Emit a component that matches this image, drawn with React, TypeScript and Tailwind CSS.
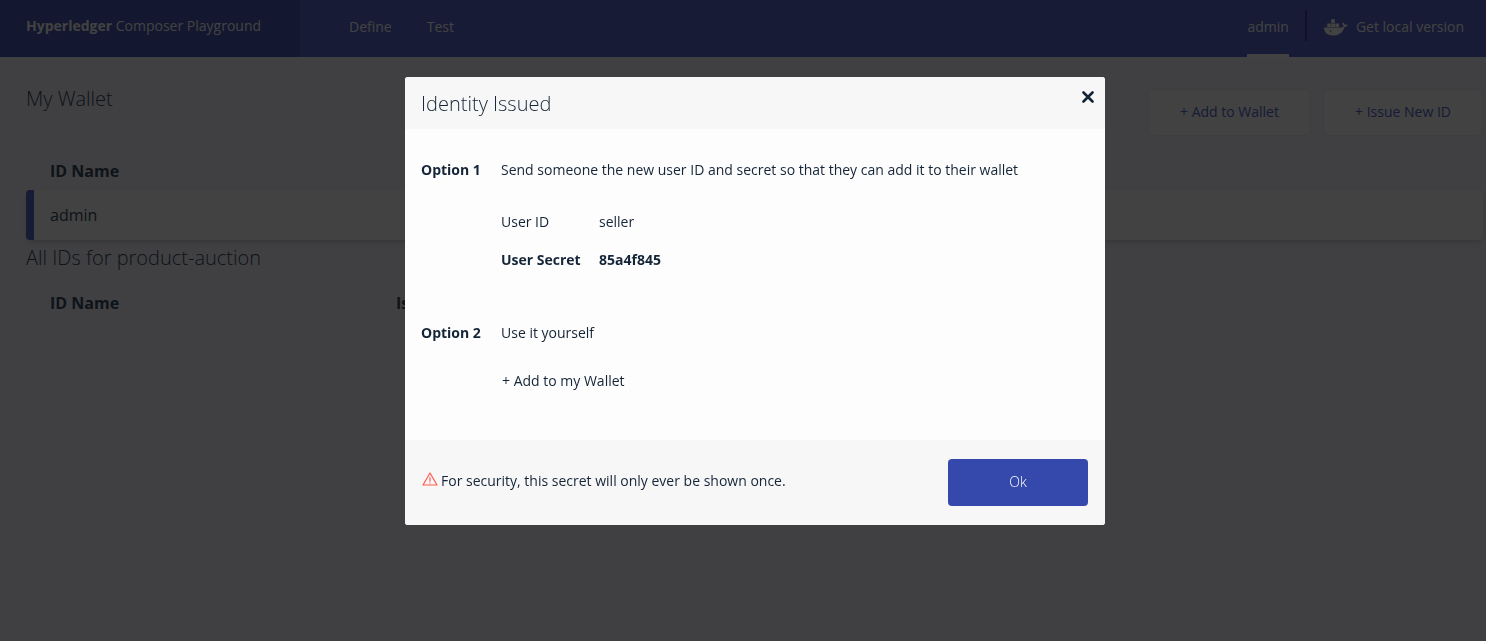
import React from "react";

function DockerIcon() {
  return (
    <svg viewBox="0 0 24 17" className="mt-0.5 h-[17px] w-6" fill="currentColor" aria-hidden="true">
      <path d="M0 8.6H17.6C18.9 8.3 19.3 7.7 19.7 7C18.2 6.2 18 4.6 18.8 3.2C20.1 3.8 20.6 4.7 20.6 5.6C21.8 5.3 23 5.5 24 6.1C23.4 7.3 22.2 7.9 20.6 7.9C18.8 13.4 15 16.5 9 16.5C3.4 16.5 0.2 13.8 0 8.6Z" />
      <path d="M3.2 4.5H6.8V8H3.2ZM7.2 4.5H10.9V8H7.2ZM11.3 4.5H15V8H11.3ZM7.2 0.2H10.9V4H7.2Z" />
      <circle cx="6.6" cy="12" r="0.8" fill="#3a4694" />
    </svg>
  );
}

function Navigation() {
  return (
    <nav className="flex h-[57px] bg-[#5868cc] text-sm text-white">
      <a href="#home" className="w-[300px] bg-[#4958b4] pt-4 pl-[26px]">
        <span className="font-bold">Hyperledger</span> Composer Playground
      </a>
      <div className="flex flex-1 gap-[35px] pt-[17px] pl-[49px]">
        <a href="#define">Define</a>
        <a href="#test">Test</a>
      </div>
      <div className="flex pr-[22px]">
        <a href="#admin" className="mr-4 border-b-3 border-white pt-[17px]">admin</a>
        <span className="mt-[10px] mr-[17px] h-[31px] w-0.5 bg-[#3a4694]" />
        <a href="#local" className="flex items-start gap-2 pt-[17px]">
          <DockerIcon />
          Get local version
        </a>
      </div>
    </nav>
  );
}

function Wallet() {
  return (
    <main className="pr-[3px] pl-[26px] text-[#364d60]">
      <header className="flex justify-between pt-8">
        <h1 className="text-xl leading-5 font-light">My Wallet</h1>
        <div className="flex gap-3 text-sm text-[#5868d0]">
          <button className="h-[47px] w-[163px] rounded-md border border-[#eeeef8] bg-white pb-0.5">+ Add to Wallet</button>
          <button className="h-[47px] w-[160px] rounded-md border border-[#eeeef8] bg-white pb-0.5">+ Issue New ID</button>
        </div>
      </header>
      <table className="mt-[21px] w-full text-left">
        <thead>
          <tr><th className="h-[33px] pb-1.5 pl-6 font-bold">ID Name</th></tr>
        </thead>
        <tbody>
          <tr>
            <td className="p-0">
              <div className="h-[50px] rounded border-l-8 border-[#5868cc] bg-white pl-4 leading-[50px] shadow-md">admin</div>
            </td>
          </tr>
        </tbody>
      </table>
      <h2 className="pt-1 text-xl leading-7 font-light">All IDs for product-auction</h2>
      <table className="mt-[19px] w-full text-left">
        <thead>
          <tr>
            <th className="w-[370px] pl-6 font-bold">ID Name</th>
            <th className="font-bold">Issued to</th>
          </tr>
        </thead>
      </table>
    </main>
  );
}

function CloseIcon() {
  return (
    <svg viewBox="0 0 12 12" className="h-3 w-3" fill="none" stroke="currentColor" strokeWidth="2.6" strokeLinecap="round">
      <path d="M1.5 1.5 10.5 10.5M10.5 1.5 1.5 10.5" />
    </svg>
  );
}

function WarningIcon() {
  return (
    <svg viewBox="0 0 16 14" className="mb-1 h-3.5 w-4" fill="none" stroke="#ff5a4b" strokeWidth="1.2" strokeLinejoin="round">
      <path d="M8 1 15 13H1Z" />
      <path d="M8 5.3V9.4M8 10.4V11.6" />
    </svg>
  );
}

function IdentityDialog() {
  return (
    <section
      role="dialog"
      aria-modal="true"
      aria-labelledby="dialog-title"
      className="w-[700px] max-w-full overflow-hidden rounded-[3px] bg-[#fdfdfd] text-sm text-[#152538]"
    >
      <header className="flex h-[52px] items-start justify-between bg-[#f7f7f7] pr-[11px] pl-4">
        <h2 id="dialog-title" className="pt-[13px] text-xl leading-7 font-light">Identity Issued</h2>
        <button aria-label="Close" className="mt-3.5"><CloseIcon /></button>
      </header>
      <div className="px-4 pt-[31px] pb-[49px] leading-5">
        <div className="grid grid-cols-[80px_1fr]">
          <h3 className="font-bold">Option 1</h3>
          <div>
            <p>Send someone the new user ID and secret so that they can add it to their wallet</p>
            <dl className="mt-8 grid grid-cols-[98px_1fr] gap-y-[18px]">
              <dt>User ID</dt>
              <dd>seller</dd>
              <dt className="font-bold">User Secret</dt>
              <dd className="font-bold">85a4f845</dd>
            </dl>
          </div>
        </div>
        <div className="mt-[53px] grid grid-cols-[80px_1fr]">
          <h3 className="font-bold">Option 2</h3>
          <div>
            <p>Use it yourself</p>
            <button className="mt-7 block px-px">+ Add to my Wallet</button>
          </div>
        </div>
      </div>
      <footer className="flex h-[85px] items-center justify-between bg-[#f7f7f7] px-[17px]">
        <p className="flex items-center gap-[3px] pb-1"><WarningIcon />For security, this secret will only ever be shown once.</p>
        <button className="h-[47px] w-[140px] rounded bg-[#3449ab] pb-0.5 font-light text-white">Ok</button>
      </footer>
    </section>
  );
}

export default function App() {
  return (
    <div className="relative min-h-screen bg-[#f6f6fe] font-['Open_Sans',sans-serif]">
      <Navigation />
      <Wallet />
      <div className="fixed inset-0 flex items-start justify-center bg-black/74 pt-[77px] pl-6">
        <IdentityDialog />
      </div>
    </div>
  );
}
